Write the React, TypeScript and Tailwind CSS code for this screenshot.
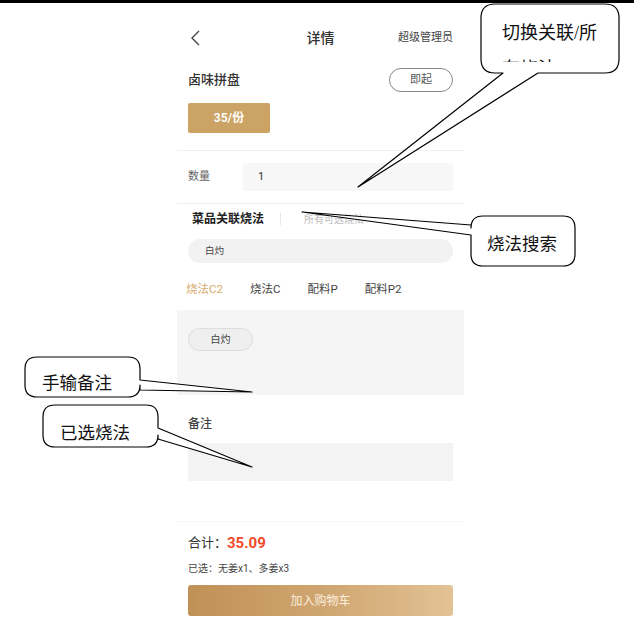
import React from "react";

const tabs = [
  { label: "烧法C2", active: true },
  { label: "烧法C", active: false },
  { label: "配料P", active: false },
  { label: "配料P2", active: false },
];

// callout balloons drawn over the screenshot (free canvas)
const callouts = [
  {
    d: "M 495 4 H 605 Q 619 4 619 18 V 59 Q 619 73 605 73 H 538 L 358 187 L 503 73 H 495 Q 481 73 481 59 V 18 Q 481 4 495 4 Z",
  },
  {
    d: "M 483 216 H 563 Q 575 216 575 228 V 254 Q 575 266 563 266 H 483 Q 471 266 471 254 V 235 L 302 212 L 471 225 V 228 Q 471 216 483 216 Z",
  },
  {
    d: "M 37 357 H 128 Q 140 357 140 369 V 380 L 252 392 L 140 390 V 385 Q 140 397 128 397 H 37 Q 25 397 25 385 V 369 Q 25 357 37 357 Z",
  },
  {
    d: "M 55 405 H 146 Q 158 405 158 417 V 428 L 252 467 L 158 439 V 435 Q 158 447 146 447 H 55 Q 43 447 43 435 V 417 Q 43 405 55 405 Z",
  },
];

const Notes = () => (
  <>
    <svg className="absolute left-0 top-0 pointer-events-none" width={634} height={632}>
      {callouts.map((c, i) => (
        <path key={i} d={c.d} fill="white" stroke="black" strokeWidth={1.2} strokeLinejoin="round" />
      ))}
    </svg>
    <div className="absolute left-[502px] top-[15px] h-[47px] overflow-hidden text-[18px] leading-[36px] text-[#111] font-['Liberation_Serif','Noto_Sans_CJK_SC',serif]">
      切换关联/所<br />有烧法
    </div>
    <div className="absolute left-[487px] top-[230px] text-[17.5px] leading-[28px] text-[#111] font-['Liberation_Serif','Noto_Sans_CJK_SC',serif]">
      烧法搜索
    </div>
    <div className="absolute left-[42px] top-[369px] text-[17.5px] leading-[28px] text-[#111] font-['Liberation_Serif','Noto_Sans_CJK_SC',serif]">
      手输备注
    </div>
    <div className="absolute left-[60px] top-[419px] text-[17.5px] leading-[28px] text-[#111] font-['Liberation_Serif','Noto_Sans_CJK_SC',serif]">
      已选烧法
    </div>
  </>
);

const App = () => {
  return (
    <div className="relative w-[634px] h-[632px] overflow-hidden bg-white font-['Roboto','Noto_Sans_CJK_SC',sans-serif]">
      <div className="h-[3px] bg-black" />

      <div className="ml-[177px] w-[287px] flex flex-col">
        {/* header */}
        <div className="mt-[20px] h-[30px] px-[11px] flex items-center justify-between relative">
          <svg width="12" height="18" viewBox="0 0 12 18" className="ml-[2px]">
            <polyline points="9,2 2,9 9,16" fill="none" stroke="#444" strokeWidth="1.4" />
          </svg>
          <div className="absolute left-0 right-0 text-center text-[14px] font-medium text-[#333]">详情</div>
          <div className="text-[11px] text-[#444]">超级管理员</div>
        </div>

        {/* dish */}
        <div className="mt-[15px] h-[24px] px-[11px] flex items-center justify-between">
          <div className="text-[13px] font-medium text-[#333]">卤味拼盘</div>
          <div className="w-[64px] h-[24px] rounded-full border border-[#888] flex items-center justify-center text-[11px] text-[#555]">
            即起
          </div>
        </div>
        <div className="mt-[11px] px-[11px]">
          <div className="w-[82px] h-[30px] rounded-[2px] bg-[#cba465] flex items-center justify-center text-[12px] font-semibold text-white">
            35/份
          </div>
        </div>

        <div className="mt-[17px] h-px bg-[#f0f0f0]" />

        {/* quantity */}
        <div className="mt-[12px] h-[28px] px-[11px] flex items-center">
          <div className="w-[55px] text-[11px] text-[#666]">数量</div>
          <div className="flex-1 h-full bg-[#f7f7f7] rounded-[2px] flex items-center pl-[15px] text-[11px] text-[#333]">
            1
          </div>
        </div>

        <div className="mt-[12px] h-px bg-[#f0f0f0]" />

        {/* cooking methods */}
        <div className="mt-[6px] h-[18px] pl-[15px] flex items-center">
          <div className="text-[12px] font-bold text-[#222]">菜品关联烧法</div>
          <div className="ml-[16px] w-px h-[12px] bg-[#e6e6e6]" />
          <div className="ml-[23px] text-[10px] text-[#bbb]">所有可选烧法</div>
        </div>
        <div className="mt-[11px] px-[11px]">
          <div className="h-[24px] rounded-full bg-[#f2f2f2] flex items-center pl-[17px] text-[9.5px] text-[#444]">
            白灼
          </div>
        </div>

        <div className="mt-[18px] h-[18px] pl-[9px] flex items-center gap-[27px] text-[11.5px] text-[#444]">
          {tabs.map((t) => (
            <div key={t.label} className={t.active ? "text-[#d6ab6a]" : ""}>
              {t.label}
            </div>
          ))}
        </div>

        <div className="mt-[11px] h-[85px] bg-[#f5f5f5] pt-[18px] px-[11px]">
          <div className="w-[65px] h-[23px] rounded-full border border-[#dcdcdc] bg-[#efefef] flex items-center justify-center text-[10px] text-[#444]">
            白灼
          </div>
        </div>

        {/* remark */}
        <div className="mt-[20px] h-[18px] px-[11px] flex items-center text-[12px] font-medium text-[#444]">备注</div>
        <div className="mt-[10px] px-[11px]">
          <div className="h-[38px] bg-[#f3f3f3]" />
        </div>

        <div className="mt-[40px] h-px bg-[#f5f5f5]" />

        {/* footer */}
        <div className="mt-[11px] h-[20px] px-[11px] flex items-center">
          <span className="text-[13px] text-[#333]">合计：</span>
          <span className="text-[15px] font-bold text-[#f2492a]">35.09</span>
        </div>
        <div className="mt-[8px] h-[14px] px-[11px] flex items-center text-[10px] text-[#444]">
          已选：无姜x1、多姜x3
        </div>
        <div className="mt-[10px] px-[11px]">
          <div className="h-[31px] rounded-[3px] bg-gradient-to-r from-[#c09157] via-[#cfa56f] to-[#e3c295] flex items-center justify-center text-[12px] text-[#fbeede]">
            加入购物车
          </div>
        </div>
      </div>

      <Notes />
    </div>
  );
};

export default App;
